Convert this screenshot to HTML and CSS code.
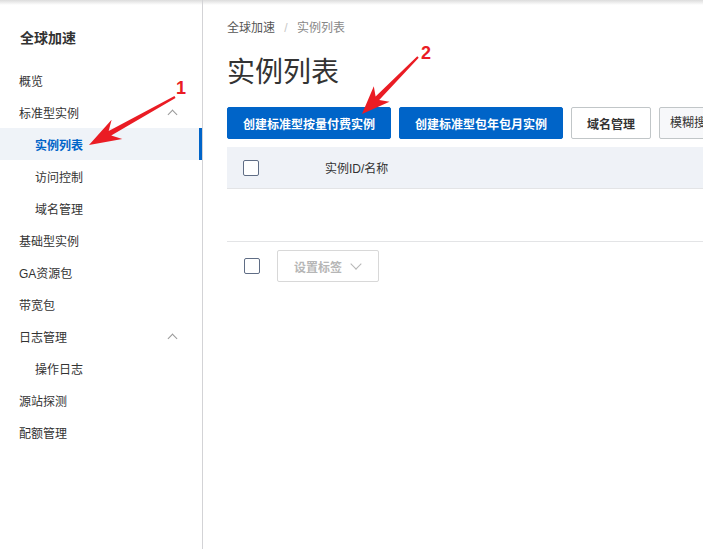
FILE: index.html
```html
<!DOCTYPE html>
<html lang="zh-CN">
<head>
    <meta charset="UTF-8">
    <meta name="viewport" content="width=device-width, initial-scale=1.0">
    <title>全球加速 - 实例列表</title>
    <link rel="stylesheet" href="styles.css">
</head>
<body>
    <div class="layout">
        <div class="sidebar">
            <div class="side-title">全球加速</div>
            <div class="menu">
                <div class="menu-item">概览</div>
                <div class="menu-item">标准型实例<span class="chev-up"></span></div>
                <div class="menu-item sub active">实例列表</div>
                <div class="menu-item sub">访问控制</div>
                <div class="menu-item sub">域名管理</div>
                <div class="menu-item">基础型实例</div>
                <div class="menu-item">GA资源包</div>
                <div class="menu-item">带宽包</div>
                <div class="menu-item">日志管理<span class="chev-up"></span></div>
                <div class="menu-item sub">操作日志</div>
                <div class="menu-item">源站探测</div>
                <div class="menu-item">配额管理</div>
            </div>
        </div>

        <div class="main">
            <div class="breadcrumb">
                <span class="crumb">全球加速</span>
                <span class="sep">/</span>
                <span class="crumb current">实例列表</span>
            </div>
            <h1 class="page-title">实例列表</h1>

            <div class="toolbar">
                <button class="btn primary">创建标准型按量付费实例</button>
                <button class="btn primary">创建标准型包年包月实例</button>
                <button class="btn">域名管理</button>
                <div class="search">模糊搜索</div>
            </div>

            <div class="table">
                <div class="table-head">
                    <span class="checkbox"></span>
                    <span class="col-name">实例ID/名称</span>
                </div>
                <div class="table-empty"></div>
                <div class="table-foot">
                    <span class="checkbox"></span>
                    <button class="btn disabled">设置标签<span class="chev-down"></span></button>
                </div>
            </div>
        </div>

        <!-- annotation arrows -->
        <svg class="marks" width="703" height="550" viewBox="0 0 703 550">
            <polygon fill="#ea1c24" points="175.5,97.9 111.2,135.5 122.3,139 89,145 111.6,119.8 108.7,131.1 174.5,96.1"/>
            <text x="176" y="94" class="mark-num">1</text>
            <polygon fill="#ea1c24" points="418.7,57.7 379.2,100 389.5,101.7 362,114 373.8,86.3 375.6,96.6 417.3,56.3"/>
            <text x="421" y="59" class="mark-num">2</text>
        </svg>
    </div>
</body>
</html>
```

FILE: styles.css
```css
body {
    margin: 0;
    font-family: "Liberation Sans", "Noto Sans CJK SC", sans-serif;
    font-size: 12px;
    color: #333;
    background-color: #fff;
}
.layout {
    position: relative;
    display: flex;
    height: 550px;
    overflow: hidden;
    background: linear-gradient(#dcdcdc, #fff 5px);
}

/* sidebar */
.sidebar {
    width: 202px;
    height: 549px;
    flex-shrink: 0;
    border-right: 1px solid #d3d3d6;
}
.side-title {
    padding: 28px 0 16px 20px;
    line-height: 20px;
    font-size: 14px;
    font-weight: bold;
    color: #333;
}
.menu-item {
    display: flex;
    align-items: center;
    justify-content: space-between;
    height: 32px;
    padding: 0 24px 0 19px;
    color: #333;
}
.menu-item.sub {
    padding-left: 35px;
}
.menu-item.active {
    background-color: #eff3f8;
    color: #0064c8;
    font-weight: bold;
    box-shadow: inset -3px 0 0 #0064c8;
}
.chev-up {
    width: 6px;
    height: 6px;
    margin-top: 5px;
    margin-right: 2px;
    border-left: 1px solid #999;
    border-top: 1px solid #999;
    transform: rotate(45deg);
}

/* main */
.main {
    flex: 1;
    min-width: 0;
    padding-left: 24px;
}
.breadcrumb {
    padding-top: 20px;
    line-height: 16px;
}
.crumb {
    color: #555;
}
.crumb.current {
    color: #888;
}
.sep {
    margin: 0 6px;
    color: #c8c8c8;
}
.page-title {
    margin: 19px 0 0;
    line-height: 36px;
    font-size: 28px;
    font-weight: normal;
    color: #333;
}

.toolbar {
    display: flex;
    gap: 8px;
    margin-top: 16px;
    white-space: nowrap;
}
.btn {
    flex-shrink: 0;
    height: 32px;
    padding: 0 15px;
    border: 1px solid #c1c6c8;
    border-radius: 2px;
    background-color: #fff;
    font-family: inherit;
    font-size: 12px;
    font-weight: bold;
    color: #333;
}
.btn.primary {
    background-color: #0064c8;
    border-color: #0064c8;
    color: #fff;
}
.search {
    flex-shrink: 0;
    width: 120px;
    height: 30px;
    line-height: 30px;
    padding-left: 10px;
    border: 1px solid #c1c6c8;
    border-radius: 2px;
    background-color: #f7f8fa;
    color: #333;
}

/* table */
.table {
    width: 700px;
    margin-top: 8px;
}
.table-head {
    display: flex;
    align-items: center;
    height: 41px;
    padding-left: 16px;
    background-color: #eff2f7;
    border-bottom: 1px solid #e3e4e6;
}
.checkbox {
    width: 14px;
    height: 14px;
    flex-shrink: 0;
    border: 1px solid #5f6d85;
    border-radius: 2px;
    background-color: #fff;
}
.col-name {
    margin-left: 66px;
    color: #333;
}
.table-empty {
    height: 52px;
    border-bottom: 1px solid #e3e4e6;
}
.table-foot {
    display: flex;
    align-items: center;
    gap: 17px;
    padding: 8px 0 0 17px;
}
.btn.disabled {
    display: flex;
    align-items: center;
    gap: 8px;
    padding: 0 16px;
    border-color: #d8d8d8;
    color: #b6b6b6;
}
.chev-down {
    width: 7px;
    height: 7px;
    margin: -5px 2px 0;
    border-right: 1px solid #b6b6b6;
    border-bottom: 1px solid #b6b6b6;
    transform: rotate(45deg);
}

/* red annotation */
.marks {
    position: absolute;
    left: 0;
    top: 0;
    pointer-events: none;
}
.mark-num {
    fill: #ea1c24;
    font-family: "Liberation Sans", sans-serif;
    font-size: 18px;
    font-weight: bold;
}
```
